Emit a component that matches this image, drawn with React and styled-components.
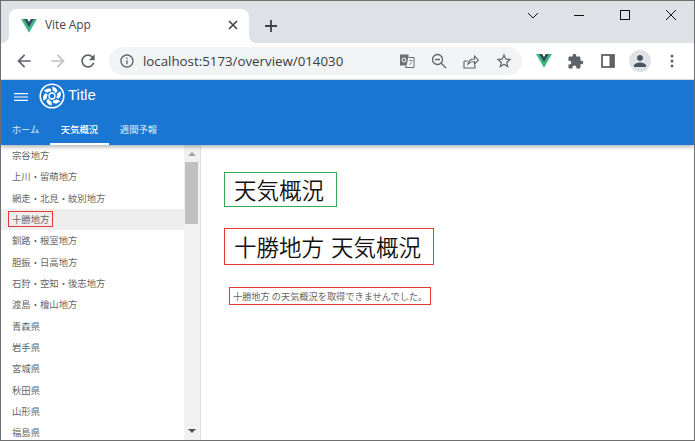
import React from "react";
import styled, { createGlobalStyle } from "styled-components";

const Global = createGlobalStyle`
  html, body { margin: 0; padding: 0; overflow: hidden; background: #fff; }
  #root { width: 695px; height: 441px; }
  * { box-sizing: border-box; }
`;

const Frame = styled.div`
  width: 695px; height: 441px;
  border: 1px solid #6e6e6e;
  display: flex; flex-direction: column; overflow: hidden; background: #fff;
  font-family: "Noto Sans CJK JP", "Noto Sans", sans-serif;
`;
const TabStrip = styled.div`
  height: 42px; flex: none; background: #dee1e6;
  display: flex; align-items: flex-end; padding-left: 8px;
`;
const Tab = styled.div`
  position: relative; width: 240px; height: 34px; background: #fff;
  border-radius: 8px 8px 0 0; display: flex; align-items: center;
  padding: 0 0 0 12px; color: #45484c;
  font: 12px "Open Sans", "Noto Sans", sans-serif;
  &::before, &::after {
    content: ""; position: absolute; bottom: 0; width: 8px; height: 8px;
  }
  &::before { left: -8px; background: radial-gradient(circle at 0 0, transparent 8px, #fff 8.5px); }
  &::after { right: -8px; background: radial-gradient(circle at 100% 0, transparent 8px, #fff 8.5px); }
`;
const TabTitle = styled.span`
  margin-left: 8px; flex: 1; line-height: 16px; position: relative; top: -1px; letter-spacing: -0.1px;
`;
const TabClose = styled.svg`
  width: 10px; height: 10px; margin-right: 11px; position: relative; top: -1px;
`;
const NewTab = styled.svg`
  width: 14px; height: 14px; margin: 0 0 10px 15px;
`;
const WinButtons = styled.div`
  margin-left: auto; align-self: flex-start; display: flex; height: 28px; align-items: center;
`;
const WinBtn = styled.svg`
  width: 46px; height: 12px; color: #111;
`;
const Toolbar = styled.div`
  height: 37px; flex: none; background: #fff; display: flex; align-items: center;
  padding-left: 13px; border-bottom: 1px solid #e3e5e8;
`;
const NavIcon = styled.svg`
  width: ${p => p.$s || 20}px; height: ${p => p.$s || 20}px; flex: none;
  margin-right: ${p => p.$mr ?? 0}px; margin-left: ${p => p.$ml ?? 0}px;
  color: ${p => p.$c || "#5f6368"};
`;
const Omnibox = styled.div`
  width: 413px; height: 28px; margin-left: 11px; border-radius: 14px; background: #f1f3f4;
  display: flex; align-items: center; padding: 0 9px 0 10px; flex: none;
`;
const Url = styled.span`
  margin-left: 8px; flex: 1; font: 13.3px "Open Sans", "Noto Sans", sans-serif; color: #3a3c40; white-space: nowrap;
`;
const Avatar = styled.div`
  width: 22px; height: 22px; border-radius: 50%; background: #dee1e6; flex: none;
  display: flex; align-items: center; justify-content: center; margin-left: 14px;
`;
const ExtensionSlot = styled.div`
  margin-left: 14px; display: flex;
`;
const AppBar = styled.header`
  flex: none; height: 65px; background: #1976d2; color: #fff; position: relative; z-index: 2;
  box-shadow: 0 2px 4px rgba(0,0,0,.3);
  display: flex; flex-direction: column;
`;
const TitleRow = styled.div`
  height: 33px; display: flex; align-items: center; padding-left: 13px;
`;
const LogoMark = styled.svg`
  width: 26px; height: 26px; margin: 0 0 2px 11px; flex: none;
`;
const Title = styled.span`
  font: 15px "Liberation Sans", Roboto, sans-serif; margin-left: 3px; position: relative; top: -2px;
`;
const Tabs = styled.nav`
  height: 32px; display: flex;
`;
const NavTab = styled.div`
  width: ${p => p.$w}px; display: flex; align-items: center; justify-content: center;
  font-size: 9.33px; font-weight: 500; color: ${p => p.$active ? "#fff" : "rgba(255,255,255,.76)"};
  border-bottom: 2px solid ${p => p.$active ? "#fff" : "transparent"};
  padding-top: 1px;
`;
const Body = styled.div`
  flex: 1; min-height: 0; display: flex;
`;
const Sidebar = styled.aside`
  width: 200px; flex: none; display: flex; border-right: 1px solid #e0e0e0;
`;
const List = styled.ul`
  list-style: none; margin: 0; padding: 0; flex: 1; overflow: hidden;
`;
const Row = styled.li`
  height: 21.33px; display: flex; align-items: center; padding: 0 0 1px 7px;
  background: ${p => p.$on ? "#eeeeee" : "transparent"};
  font-size: 9.33px; color: #666; white-space: nowrap;
`;
const RowLabel = styled.span`
  border: 1px solid ${p => p.$on ? "#e53935" : "transparent"}; padding: 0 3px; line-height: 14px; color: #666;
`;
const Scrollbar = styled.div`
  width: 16px; flex: none; background: #f1f1f1; display: flex; flex-direction: column; align-items: center;
`;
const Arrow = styled.div`
  width: 0; height: 0; flex: none; border-left: 4px solid transparent; border-right: 4px solid transparent;
  ${p => p.$up
    ? "border-bottom: 4px solid #a3a3a3; margin-top: 7px;"
    : "border-top: 4px solid #505050; margin: auto 0 7px;"}
`;
const Thumb = styled.div`
  width: 13px; height: 62px; background: #c1c1c1; margin: 6px 0 0 1px; align-self: flex-start; flex: none;
`;
const Main = styled.main`
  flex: 1; padding: 27px 23px 0; display: flex; flex-direction: column; align-items: flex-start;
`;
const Heading = styled.div`
  border: 1px solid ${p => p.$c}; padding: 0 12px 0 9px; color: #111;
  font-size: 22.5px; line-height: ${p => p.$lh}px; margin-bottom: ${p => p.$mb}px; white-space: nowrap;
  font-weight: 350; word-spacing: 2px;
`;
const Notice = styled.div`
  border: 1px solid #e53935; margin-left: 5px; padding: 0 3px; font-size: 9.2px; line-height: 16px;
  color: #666; white-space: nowrap;
`;

const VueLogo = ({ s = 16 }) => (
  <svg width={s} height={s * 0.86} viewBox="0 0 256 221">
    <path fill="#41b883" d="M204.8 0H256L128 220.8 0 0h97.9L128 51.2 157.4 0z" />
    <path fill="#35495e" d="M50.2 0 128 133.8 205.2 0h-47.8L128 51.2 97.9 0z" />
  </svg>
);

const Logo = () => (
  <LogoMark viewBox="0 0 26 26">
    <circle cx="13" cy="13" r="11.8" fill="none" stroke="#fff" strokeWidth="1.6" />
    {[0, 60, 120, 180, 240, 300].map(a => (
      <path key={a} transform={`rotate(${a} 13 13)`} fill="#fff" d="M13.2 3.4c3.2.6 5 2.4 5.4 5.2l-2.4 1.6c-.2-1.5-1.2-2.4-2.6-2.7z" />
    ))}
    <circle cx="13" cy="13" r="3" fill="none" stroke="#fff" strokeWidth="1.3" />
  </LogoMark>
);

const regions = ["宗谷地方","上川・留萌地方","網走・北見・紋別地方","十勝地方","釧路・根室地方","胆振・日高地方","石狩・空知・後志地方","渡島・檜山地方","青森県","岩手県","宮城県","秋田県","山形県","福島県"];

export default function App() {
  return (
    <Frame>
      <Global />
      <TabStrip>
        <Tab>
          <VueLogo />
          <TabTitle>Vite App</TabTitle>
          <TabClose viewBox="0 0 10 10"><path d="M1 1l8 8M9 1l-8 8" stroke="#3c4043" strokeWidth="1.6" /></TabClose>
        </Tab>
        <NewTab viewBox="0 0 14 14"><path d="M7 1v12M1 7h12" stroke="#3c4043" strokeWidth="1.8" /></NewTab>
        <WinButtons>
          <WinBtn viewBox="0 0 46 12"><path d="M18 4l5 5 5-5" fill="none" stroke="currentColor" strokeWidth="1" /></WinBtn>
          <WinBtn viewBox="0 0 46 12"><path d="M18 6.5h10" stroke="currentColor" strokeWidth="1" /></WinBtn>
          <WinBtn viewBox="0 0 46 12"><rect x="18.5" y="1.5" width="9" height="9" fill="none" stroke="currentColor" strokeWidth="1" /></WinBtn>
          <WinBtn viewBox="0 0 46 12"><path d="M18 1l10 10M28 1L18 11" stroke="currentColor" strokeWidth="1" /></WinBtn>
        </WinButtons>
      </TabStrip>
      <Toolbar>
        <NavIcon viewBox="0 0 24 24" $mr={14} fill="currentColor"><path d="M20 11H7.83l5.59-5.59L12 4l-8 8 8 8 1.41-1.41L7.83 13H20v-2z" /></NavIcon>
        <NavIcon viewBox="0 0 24 24" $mr={10} $c="#bdc1c6" fill="currentColor"><path d="M12 4l-1.41 1.41L16.17 11H4v2h12.17l-5.58 5.59L12 20l8-8z" /></NavIcon>
        <NavIcon viewBox="0 0 24 24" fill="currentColor"><path d="M17.65 6.35C16.2 4.9 14.21 4 12 4c-4.42 0-7.99 3.58-7.99 8s3.57 8 7.99 8c3.73 0 6.84-2.55 7.73-6h-2.08c-.82 2.33-3.04 4-5.65 4-3.31 0-6-2.69-6-6s2.69-6 6-6c1.66 0 3.14.69 4.22 1.78L13 11h7V4l-2.35 2.35z" /></NavIcon>
        <Omnibox>
          <NavIcon viewBox="0 0 24 24" $s={16} fill="currentColor"><path d="M11 7h2v2h-2zm0 4h2v6h-2zm1-9C6.48 2 2 6.48 2 12s4.48 10 10 10 10-4.48 10-10S17.52 2 12 2zm0 18c-4.41 0-8-3.59-8-8s3.59-8 8-8 8 3.59 8 8-3.59 8-8 8z" /></NavIcon>
          <Url>localhost:5173/overview/014030</Url>
          <NavIcon viewBox="0 0 16 16" $s={16} $mr={16}>
            <rect x="1" y="1.5" width="8.5" height="11" fill="#6a6e73" />
            <path d="M9.5 4.5H15v10H6.5l1-2" fill="#f5f5f5" stroke="#6a6e73" strokeWidth="1" />
            <circle cx="5" cy="7" r="2" fill="none" stroke="#fff" strokeWidth="1" />
            <path d="M10 7.5h3.5M12 7v1M10.500 12l2.500-3.500" stroke="#6a6e73" strokeWidth=".8" fill="none" />
          </NavIcon>
          <NavIcon viewBox="0 0 16 16" $s={16} $mr={16} fill="none" stroke="currentColor" strokeWidth="1.3">
            <circle cx="6.5" cy="6.5" r="5" /><path d="M10.2 10.2L15 15M4 6.5h5" />
          </NavIcon>
          <NavIcon viewBox="0 0 16 16" $s={16} $mr={16} fill="none" stroke="currentColor" strokeWidth="1.1">
            <path d="M1 8v7h11v-3M1 8h3.500M5 11c.5-3 3-5 6.500-5V3l4 4.200-4 4V8.500C9 8.500 6.500 9.500 5 11z" />
          </NavIcon>
          <NavIcon viewBox="0 0 24 24" $s={18} fill="currentColor"><path d="M22 9.240l-7.190-.62L12 2 9.190 8.630 2 9.240l5.460 4.730L5.820 21 12 17.270 18.180 21l-1.630-7.030L22 9.240zM12 15.400l-3.760 2.270 1-4.280-3.320-2.880 4.380-.38L12 6.100l1.710 4.040 4.380.38-3.320 2.880 1 4.280L12 15.400z" /></NavIcon>
        </Omnibox>
        <ExtensionSlot><VueLogo /></ExtensionSlot>
        <NavIcon viewBox="0 0 24 24" $s={17} $ml={15} fill="currentColor"><path d="M20.5 11H19V7c0-1.1-.9-2-2-2h-4V3.500C13 2.120 11.880 1 10.500 1S8 2.120 8 3.500V5H4c-1.100 0-1.990.9-1.990 2v3.800H3.500c1.490 0 2.700 1.210 2.700 2.700s-1.210 2.700-2.700 2.700H2V20c0 1.100.9 2 2 2h3.800v-1.500c0-1.490 1.210-2.700 2.700-2.700 1.490 0 2.700 1.210 2.700 2.700V22H17c1.100 0 2-.9 2-2v-4h1.500c1.380 0 2.500-1.120 2.500-2.500S21.880 11 20.500 11z" /></NavIcon>
        <NavIcon viewBox="0 0 14 14" $s={14} $ml={17} fill="none" stroke="currentColor">
          <rect x="1" y="1" width="12" height="12" fill="#fff" strokeWidth="1.800" /><rect x="8.500" y="1" width="4.500" height="12" fill="currentColor" stroke="none" />
        </NavIcon>
        <Avatar>
          <NavIcon viewBox="0 0 24 24" $s={18} $c="#4b5563" fill="currentColor"><path d="M12 12c2.210 0 4-1.790 4-4s-1.790-4-4-4-4 1.790-4 4 1.790 4 4 4zm0 2c-2.670 0-8 1.340-8 4v2h16v-2c0-2.660-5.330-4-8-4z" /></NavIcon>
        </Avatar>
        <NavIcon viewBox="0 0 4 14" $s={14} $ml={14} fill="currentColor"><circle cx="2" cy="2" r="1.500" /><circle cx="2" cy="7" r="1.500" /><circle cx="2" cy="12" r="1.500" /></NavIcon>
      </Toolbar>
      <AppBar>
        <TitleRow>
          <NavIcon viewBox="0 0 14 10" $s={14} $c="#fff" fill="currentColor">
            <path d="M0 1h14v1.200H0zM0 4.400h14v1.200H0zM0 7.800h14V9H0z" />
          </NavIcon>
          <Logo />
          <Title>Title</Title>
        </TitleRow>
        <Tabs>
          <NavTab $w={49}>ホーム</NavTab>
          <NavTab $w={59} $active>天気概況</NavTab>
          <NavTab $w={59}>週間予報</NavTab>
        </Tabs>
      </AppBar>
      <Body>
        <Sidebar>
          <List>
            {regions.map(r => (
              <Row key={r} $on={r === "十勝地方"}>
                <RowLabel $on={r === "十勝地方"}>{r}</RowLabel>
              </Row>
            ))}
          </List>
          <Scrollbar>
            <Arrow $up />
            <Thumb />
            <Arrow />
          </Scrollbar>
        </Sidebar>
        <Main>
          <Heading $c="#34a853" $lh={33} $mb={21}>天気概況</Heading>
          <Heading $c="#e53935" $lh={35} $mb={22}>十勝地方 天気概況</Heading>
          <Notice>十勝地方 の天気概況を取得できませんでした。</Notice>
        </Main>
      </Body>
    </Frame>
  );
}
